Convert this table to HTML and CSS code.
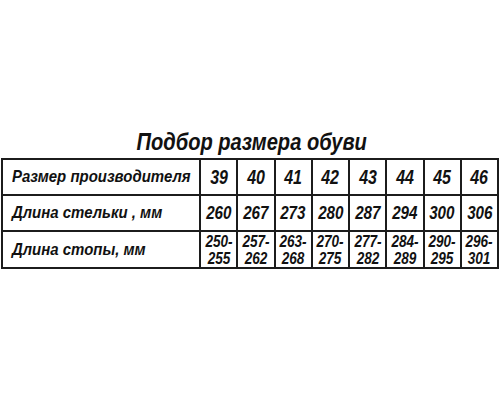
FILE: index.html
```html
<!DOCTYPE html>
<html lang="ru">
<head>
<meta charset="utf-8">
<link rel="stylesheet" href="styles.css">
</head>
<body>
<div class="page">
  <h1 class="title"><span class="sq">Подбор размера обуви</span></h1>
  <div class="grid">
    <div class="cell label r1"><span class="sql">Размер производителя</span></div>
    <div class="cell r1"><span class="sq">39</span></div>
    <div class="cell r1"><span class="sq">40</span></div>
    <div class="cell r1"><span class="sq">41</span></div>
    <div class="cell r1"><span class="sq">42</span></div>
    <div class="cell r1"><span class="sq">43</span></div>
    <div class="cell r1"><span class="sq">44</span></div>
    <div class="cell r1"><span class="sq">45</span></div>
    <div class="cell r1"><span class="sq">46</span></div>

    <div class="cell label r2"><span class="sql">Длина стельки , мм</span></div>
    <div class="cell r2"><span class="sq">260</span></div>
    <div class="cell r2"><span class="sq">267</span></div>
    <div class="cell r2"><span class="sq">273</span></div>
    <div class="cell r2"><span class="sq">280</span></div>
    <div class="cell r2"><span class="sq">287</span></div>
    <div class="cell r2"><span class="sq">294</span></div>
    <div class="cell r2"><span class="sq">300</span></div>
    <div class="cell r2"><span class="sq">306</span></div>

    <div class="cell label r3"><span class="sql">Длина стопы, мм</span></div>
    <div class="cell r3"><span class="sq">250-<br>255</span></div>
    <div class="cell r3"><span class="sq">257-<br>262</span></div>
    <div class="cell r3"><span class="sq">263-<br>268</span></div>
    <div class="cell r3"><span class="sq">270-<br>275</span></div>
    <div class="cell r3"><span class="sq">277-<br>282</span></div>
    <div class="cell r3"><span class="sq">284-<br>289</span></div>
    <div class="cell r3"><span class="sq">290-<br>295</span></div>
    <div class="cell r3"><span class="sq">296-<br>301</span></div>
  </div>
</div>
</body>
</html>
```
FILE: styles.css
```css
html, body {
  margin: 0;
  padding: 0;
  background: #fff;
}
.page {
  width: 500px;
  height: 400px;
  padding-top: 129px;
  box-sizing: border-box;
  font-family: "Liberation Sans", Arial, sans-serif;
  font-weight: bold;
  font-style: italic;
  color: #111;
}
.title {
  margin: 0 0 3px 0;
  text-align: center;
  font-size: 23px;
  line-height: 26px;
  font-weight: bold;
  padding-left: 4px;
}
.sq {
  display: inline-block;
  white-space: nowrap;
  transform: scaleX(0.8);
  transform-origin: center center;
}
.title .sq {
  transform: scaleX(0.875);
}
.sql {
  display: inline-block;
  white-space: nowrap;
  transform: scaleX(0.88);
  transform-origin: left center;
}
.grid {
  margin-left: 1px;
  width: 498px;
  box-sizing: border-box;
  display: grid;
  grid-template-columns: 196px repeat(8, 1fr);
  grid-template-rows: 34px 34px 35px;
  gap: 2px;
  padding: 2px;
  background: #1c1c1c;
}
.cell {
  background: #fff;
  display: flex;
  align-items: center;
  justify-content: center;
  text-align: center;
}
.cell.label {
  justify-content: flex-start;
  padding-left: 9px;
  font-size: 17px;
}
.r1 { font-size: 20px; }
.r2 { font-size: 19px; }
.r3 { font-size: 17px; line-height: 17px; }
.cell.label.r1, .cell.label.r2, .cell.label.r3 { font-size: 17px; line-height: 20px; }
```
